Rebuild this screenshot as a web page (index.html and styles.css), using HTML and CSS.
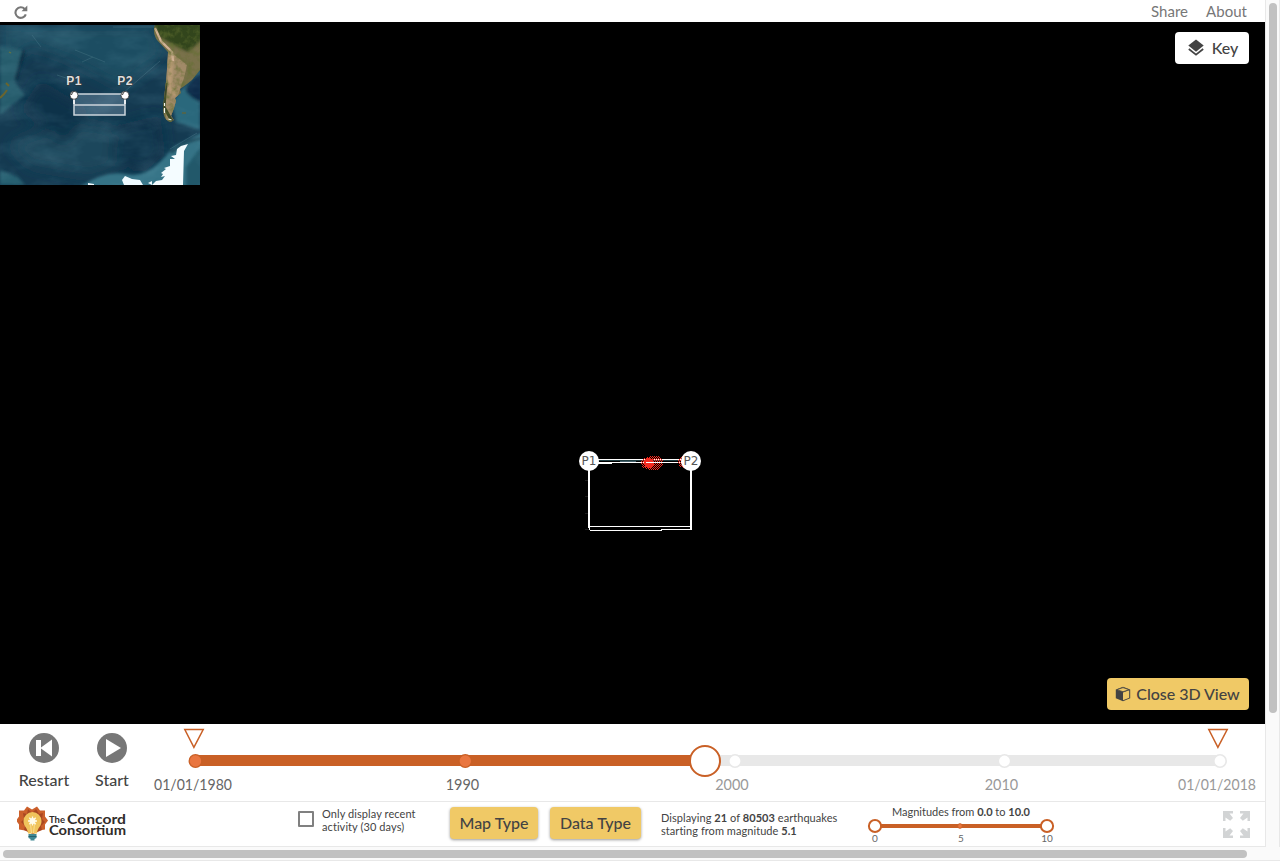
FILE: index.html
```html
<!DOCTYPE html>
<html lang="en">
<head>
<meta charset="utf-8">
<title>Seismic Explorer</title>
<link rel="stylesheet" href="styles.css">
</head>
<body>
<div class="window">
  <div class="app">
    <header class="topbar">
      <svg class="reload" width="14" height="14" viewBox="0 0 14 14"><path d="M10.700 4A5.300 5.300 0 1 0 11.800 9.300" fill="none" stroke="#777" stroke-width="2.1"/><path d="M13.300.500v5.800H7.500z" fill="#777"/></svg>
      <nav class="links"><span>Share</span><span>About</span></nav>
    </header>
    <main class="view">
      <svg class="minimap" width="200" height="160" viewBox="0 0 200 160">
        <defs>
          <filter id="soft" x="-20%" y="-20%" width="140%" height="140%"><feGaussianBlur stdDeviation="7"/></filter>
          <filter id="soft2" x="-10%" y="-10%" width="120%" height="120%"><feGaussianBlur stdDeviation="1.5"/></filter>
          <filter id="fine"><feGaussianBlur stdDeviation=".5"/></filter>
          <filter id="grain" x="0" y="0" width="100%" height="100%"><feTurbulence type="fractalNoise" baseFrequency=".025 .05" numOctaves="4" seed="8"/><feColorMatrix values="0 0 0 0 .22  0 0 0 0 .48  0 0 0 0 .58  1.200 0 0 0 -.48"/></filter>
          <filter id="landgrain" x="0" y="0" width="100%" height="100%"><feTurbulence type="fractalNoise" baseFrequency=".16" numOctaves="3" seed="5"/><feColorMatrix values="0 0 0 0 .12  0 0 0 0 .16  0 0 0 0 .03  2.4 0 0 0 -1"/></filter>
          <clipPath id="land"><path d="M155 0C153 5 154 10 157 15L168 27C167 40 167 52 165 65L163 82C163 90 165 96 171 97L174 95 171 91 174 83 176 76 175 73 181 68 180 64 187 59 192 55 196 50 200 45V0z"/></clipPath>
        </defs>
        <rect width="200" height="160" fill="#143a51"/>
        <g filter="url(#soft)">
          <path d="M0 0H155L165 30 120 62 70 35 30 20 0 50z" fill="#1b4d62"/>
          <path d="M10 120Q70 90 110 105T150 130L90 150 30 140z" fill="#1b465b"/>
          <path d="M40 55L90 85 65 120 20 85z" fill="#10304a"/>
          <path d="M120 100L160 90 165 130 140 150 110 130z" fill="#11324a"/>
        </g>
        <g filter="url(#soft2)">
          <path d="M0 22L22 25 15 57 25 70 10 82 0 90z" fill="#265b6c"/>
          <path d="M24 25L16 55" stroke="#092a40" stroke-width="3"/>
          <path d="M172 78L180 66 200 45V105L176 97z" fill="#2c687b"/>
          <path d="M185 64Q190 54 202 47V78Q188 72 185 64z" fill="#0d2c4a"/>
          <path d="M80 162Q105 145 125 149T160 137L175 121 202 108V162z" fill="#347386"/>
          <path d="M171 128Q184 116 202 113" stroke="#132f42" stroke-width="2" fill="none"/>
          <path d="M186 142L202 120V162H186z" fill="#24586a"/>
          <path d="M0 145L18 152 25 160H0z" fill="#255f70"/>
        </g>
        <g fill="none" stroke="#4b7888" stroke-width=".8" opacity=".5" filter="url(#fine)"><path d="M32 10l9 12M75 25l30 12M57 50l18 6M82 37l11-5M123 68l37-32M113 2h42M170 124l27-16"/></g>
        <rect width="200" height="160" filter="url(#grain)" opacity=".3"/>
        <g clip-path="url(#land)">
          <rect x="150" width="50" height="100" fill="#79714a"/>
          <path d="M150-5H205V12L188 27 174 20 160 12z" fill="#31451c" filter="url(#soft2)"/>
          <path d="M168 25L177 32 187 40 184 53 179 67 173 93 166 96 164 65z" fill="#a18a67" filter="url(#fine)"/>
          <path d="M172 28L171 41 169 63 176 70" stroke="#bc9e77" stroke-width="4" fill="none" filter="url(#soft2)"/>
          <path d="M155 3L161 16 172 27 173 36" stroke="#d2b295" stroke-width="2.200" fill="none" filter="url(#fine)"/>
          <path d="M166 58L164 82 172 96" stroke="#3d4927" stroke-width="3" fill="none"/>
          <rect x="150" width="50" height="100" filter="url(#landgrain)" opacity=".65"/>
          <path d="M164.5 78v3m0 2v5m4 6l3 1" stroke="#f5f5ed" stroke-width="1.2"/>
        </g>
        <path d="M182 88h4" stroke="#5d653e" stroke-width="1.4"/>
        <path d="M6 58l3 3m-2 4l-3 4-4 4" stroke="#69652f" stroke-width="2" fill="none"/>
        <path d="M9 27l2 1" stroke="#65733e" stroke-width="1.3"/>
        <path d="M188 119L184 126 183 160H152L156 156 162 155 165 151 161 152 163 149 161 148 166 144 164 143 170 141 170 134 175 134 171 131 176 130 177 124 181 121z" fill="#f4fcff"/>
        <path d="M122 155L125 151 132 154 140 155 143 160H124zM88 158l6 1v1h-6zM148 158l4-2v4z" fill="#eefaff"/>
        <path d="M74 69h51v21H74z" fill="#aec6de" fill-opacity=".28" stroke="#ccd5db" stroke-width="1.5"/>
        <path d="M74 80h51" stroke="#ccd5db" stroke-width="1.5"/>
        <path d="M74 71v8m51-8v8" stroke="#fff" stroke-width="1.5"/>
        <g stroke="#222" stroke-width=".7"><circle cx="74" cy="70.3" r="4" fill="#fff"/><circle cx="125" cy="70.3" r="4" fill="#fff"/></g>
        <path d="M71.5 70q0-2 2-3M122.5 70q0-2 2-3" stroke="#222" fill="none" stroke-width=".9"/>
        <g class="pin-label"><text x="74" y="59.600">P1</text><text x="125" y="59.600">P2</text></g>
      </svg>
      <button class="btn key"><svg width="16" height="18" viewBox="0 0 16 18"><path d="M8 .5l7.700 6.1L8 12.700.300 6.600z" fill="#434343"/><path d="M.8 10L8 15.6l7.2-5.6" fill="none" stroke="#434343" stroke-width="1.7"/></svg>Key</button>
      <svg class="cross-section" width="130" height="90" viewBox="0 0 130 90">
        <defs><pattern id="dots" width="2" height="2" patternUnits="userSpaceOnUse"><path d="M0 0h1v1H0zM1 1h1v1H1z" fill="#f52d20"/></pattern></defs>
        <g shape-rendering="crispEdges" fill="#fff">
          <path d="M10 35h5v1h-5zM10 51h5v1h-5zM10 68h5v1h-5zM10 84h5v1h-5z" fill="#1c1c1c"/>
          <path d="M13 15h2v68h-2zM115 15h2v69h-2zM14 81h102v1H14zM15 85h72v1H15zM14 83h1v2h-1zM86 84h31v1H86zM20 14h96v1H20zM20 17h96v1H20zM20 18h17v1H20z"/>
          <path d="M20 15h96v1H20z" fill="#203e42"/><path d="M45 16h16v1H45z" fill="#45616b"/>
          <path d="M66 16l3-3 6-2h8l5 4v6l-5 4h-8l-8-3z" fill="url(#dots)"/><circle cx="74" cy="18" r="5" fill="#f32a20"/><circle cx="109" cy="17" r="6" fill="url(#dots)"/>
          <path d="M71 17h22v1H71z"/>
        </g>
        <circle cx="14" cy="16" r="10" fill="#fff"/><circle cx="116" cy="16" r="10" fill="#fff"/>
        <g class="node-label"><text x="14" y="20">P1</text><text x="116" y="20">P2</text></g>
      </svg>
      <button class="btn close"><svg width="16" height="16" viewBox="0 0 16 16"><path d="M.8 3.5L8 .8l7.2 2.7v8.8L8 15.3.8 12.3z" fill="#434343"/><path d="M8 6.4l6.2-2.2v7.5L8 14.2z" fill="#f0c966"/><path d="M1.8 3.7L8 1.6l6 2.1-6 2z" fill="#f0c966"/><path d="M2 3.7l6-2 6 2-6 2z" fill="none" stroke="#434343" stroke-width=".7"/></svg><span>Close 3D View</span></button>
    </main>
    <section class="timeline">
      <div class="control restart"><svg width="30" height="30" viewBox="0 0 30 30"><circle cx="15" cy="15" r="15" fill="#777"/><path d="M7 7h5v7.5L23 6.5v17L12 15.5V23H7z" fill="#fff"/></svg><span>Restart</span></div>
      <div class="control start"><svg width="30" height="30" viewBox="0 0 30 30"><circle cx="15" cy="15" r="15" fill="#777"/><path d="M9 6v18l15-9z" fill="#fff"/></svg><span>Start</span></div>
      <svg class="track" width="1119" height="77" viewBox="146 0 1119 77">
        <path d="M195 31h1020q6 0 6 5.500t-6 5.500H195z" fill="#e8e8e8"/>
        <path d="M195 31h510v11H195z" fill="#c96026"/>
        <g fill="#e97640" stroke="#c96026" stroke-width="1.3"><circle cx="195.500" cy="37" r="6.300"/><circle cx="465.300" cy="37" r="6.300"/></g>
        <g fill="#fff" stroke="#e8e8e8" stroke-width="1.600"><circle cx="735" cy="37" r="6.200"/><circle cx="1004.500" cy="37" r="6.200"/><circle cx="1220" cy="37" r="6.200"/></g>
        <circle cx="705" cy="37" r="15" fill="#fff" stroke="#c96026" stroke-width="2"/>
        <path d="M184.800 5.500h18.400l-9.300 17.800zM1208.800 5.500h18.400l-9.300 17.800z" fill="#fff" stroke="#c96026" stroke-width="1.500"/>
        <g class="past"><text x="193" y="66" textLength="78" lengthAdjust="spacingAndGlyphs">01/01/1980</text><text x="462.500" y="66" textLength="33.500" lengthAdjust="spacingAndGlyphs">1990</text></g>
        <g class="future"><text x="732" y="66" textLength="33.500" lengthAdjust="spacingAndGlyphs">2000</text><text x="1001.500" y="66" textLength="33.500" lengthAdjust="spacingAndGlyphs">2010</text><text x="1217" y="66" textLength="78" lengthAdjust="spacingAndGlyphs">01/01/2018</text></g>
      </svg>
    </section>
    <footer class="toolbar">
      <svg class="logo" width="112" height="36" viewBox="0 0 112 36">
        <path d="M10 1l5 3 5-3 3 4 5 0 0 6 3 4-3 4 0 5-6 1-7 3-7-3-6-1 0-5-3-4 3-4 0-6 5 0z" transform="translate(0 -.500)" fill="#cc602b"/>
        <path d="M11 3l4 4 4-4 3 5 4-1-1 6 3 3-4 4 1 4-9 4-9-4 1-4-4-4 3-3-1-6 4 1z" fill="#a94722"/>
        <path d="M15.500 6a9 9 0 0 1 9 9c0 6-4 6-4.500 12.500h-9C10.500 21 6.500 21 6.500 15a9 9 0 0 1 9-9z" fill="#f0c35b"/>
        <path d="M15.500 10.500v9M11 15h9M12.300 11.800l6.400 6.400m0-6.400l-6.400 6.400" stroke="#fffbea" stroke-width="1.300"/><circle cx="15.500" cy="15" r="3" fill="#fffbea"/>
        <path d="M13.500 18l1 9m3-9l-1 9" stroke="#f9e3a3" stroke-width=".8"/>
        <path d="M11.500 28h8v4l-2 1v1.500h-4V33l-2-1z" fill="#408793"/><path d="M11.500 30.500h8" stroke="#27616c"/>
        <g class="brand"><text x="32" y="16.500" font-size="9.500" textLength="16">The</text><text x="50" y="18" font-size="14" textLength="59" lengthAdjust="spacingAndGlyphs">Concord</text><text x="32" y="29" font-size="13.500" textLength="77" lengthAdjust="spacingAndGlyphs">Consortium</text></g>
      </svg>
      <span class="checkbox"></span>
      <p class="recent">Only display recent<br>activity (30 days)</p>
      <button class="btn map-type">Map Type</button>
      <button class="btn data-type">Data Type</button>
      <p class="stats">Displaying <b>21</b> of <b>80503</b> earthquakes<br>starting from magnitude <b>5.1</b></p>
      <svg class="magnitude" width="200" height="44" viewBox="861 802 200 44">
        <text x="961" y="816" textLength="138">Magnitudes from <tspan class="strong">0.0</tspan> to <tspan class="strong">10.0</tspan></text>
        <path d="M875 826h172" stroke="#c96026" stroke-width="4"/>
        <circle cx="960" cy="826" r="2.300" fill="#e97640" stroke="#c96026"/>
        <g fill="#fff" stroke="#c96026" stroke-width="2"><circle cx="875" cy="826" r="6.100"/><circle cx="1047" cy="826" r="6.100"/></g>
        <g class="ticks"><text x="875" y="842">0</text><text x="961" y="842">5</text><text x="1047" y="842">10</text></g>
      </svg>
      <svg class="fullscreen" width="27" height="27" viewBox="0 0 27 27"><defs><path id="arrow" d="M0 0h10v2.500H6.500L10 7 7.200 9.800 2.500 6.500V10H0z" fill="#d2d4d5"/></defs><use href="#arrow"/><use href="#arrow" transform="translate(27 0) scale(-1 1)"/><use href="#arrow" transform="translate(0 27) scale(1 -1)"/><use href="#arrow" transform="translate(27 27) scale(-1 -1)"/></svg>
    </footer>
  </div>
  <div class="scroll-y"><div class="thumb-y"></div></div>
  <div class="scroll-x"><div class="thumb-x"></div></div>
</div>
</body>
</html>
```
FILE: styles.css
```css
* { box-sizing: border-box; }
body { margin: 0; background: #fff; color: #434343; font-family: Lato, sans-serif; overflow: hidden; }
p { margin: 0; }
.window { width: 1280px; height: 861px; display: grid; grid-template-columns: 1265px 15px; grid-template-rows: 847px 14px; background: #fafafa; }
.app { display: grid; grid-template-rows: 22px 702px 78px 45px; background: #fff; }
.topbar { display: flex; justify-content: space-between; align-items: flex-start; padding: 0 18px 0 14px; }
.reload { margin-top: 5px; }
.links { display: flex; gap: 18px; font-size: 15px; line-height: 22px; color: #777; letter-spacing: .03px; }
.view { background: #000; display: grid; grid-template-columns: 565px 1fr 160px; grid-template-rows: 418px 1fr 48px; overflow: hidden; }
.minimap { grid-area: 1 / 1; margin-top: 3px; }
.pin-label { font: bold 12px "Liberation Sans", sans-serif; text-anchor: middle; fill: #ddd; paint-order: stroke; stroke: #333; stroke-width: 1px; letter-spacing: .3px; }
.cross-section { grid-area: 2 / 2; margin-left: 10px; margin-top: 5px; }
.node-label { font: 12px "DejaVu Sans", sans-serif; text-anchor: middle; fill: #555; }
.btn { font: 500 16px/20px Lato, sans-serif; color: #434343; border: 0; border-radius: 4px; padding: 0; background: #f0c966; display: flex; align-items: center; justify-content: center; white-space: nowrap; }
.key { grid-area: 1 / 3; justify-self: end; width: 74px; height: 32px; margin: 10px 16px 0 0; background: #fff; gap: 8px; padding-left: 2px; }
.close { grid-area: 3 / 3; justify-self: end; align-self: start; width: 142px; height: 32px; margin: 2px 16px 0 0; gap: 5px; padding-right: 1px; letter-spacing: -.04px; }
.timeline { display: flex; border-bottom: 1px solid #e8e8e8; }
.control { display: flex; flex-direction: column; align-items: center; gap: 7px; padding-top: 9px; font-size: 16px; font-weight: 500; line-height: 20px; }
.restart { width: 88px; }
.start { width: 48px; margin-right: 10px; }
.track text { font-size: 15px; text-anchor: middle; }
.past { fill: #666; }
.future { fill: #999; }
.toolbar { display: flex; align-items: flex-start; border-bottom: 1px solid #e8e8e8; }
.logo { margin: 4px 0 0 17px; }
.brand { font-weight: 700; fill: #302c2a; }
.checkbox { width: 16px; height: 16px; border: 2px solid #808080; border-radius: 1px; margin: 9px 8px 0 169px; }
.recent { width: 128px; font-size: 11px; line-height: 13px; margin-top: 5px; letter-spacing: .08px; }
.toolbar .btn { height: 32px; margin-top: 5px; box-shadow: 0 1px 3px #0006; }
.map-type { width: 88px; }
.data-type { width: 91px; margin-left: 12px; }
.stats { width: 200px; margin: 9px 0 0 20px; font-size: 11px; line-height: 13px; white-space: nowrap; letter-spacing: .05px; }
.magnitude text { font-size: 11px; text-anchor: middle; fill: #434343; }
.magnitude .strong { font-weight: 700; }
.magnitude .ticks text { font-size: 10px; fill: #666; }
.fullscreen { margin: 9px 0 0 162px; }
.scroll-y { border-left: 1px solid #e8e8e8; border-right: 1px solid #e8e8e8; padding: 3px 0 0 3px; }
.thumb-y { width: 8px; height: 710px; border-radius: 4px; background: #c1c1c1; }
.scroll-x { grid-column: 1 / 3; border-bottom: 1px solid #e8e8e8; padding: 3px 0 0 3px; }
.thumb-x { width: 1244px; height: 8px; border-radius: 4px; background: #c1c1c1; }
```
